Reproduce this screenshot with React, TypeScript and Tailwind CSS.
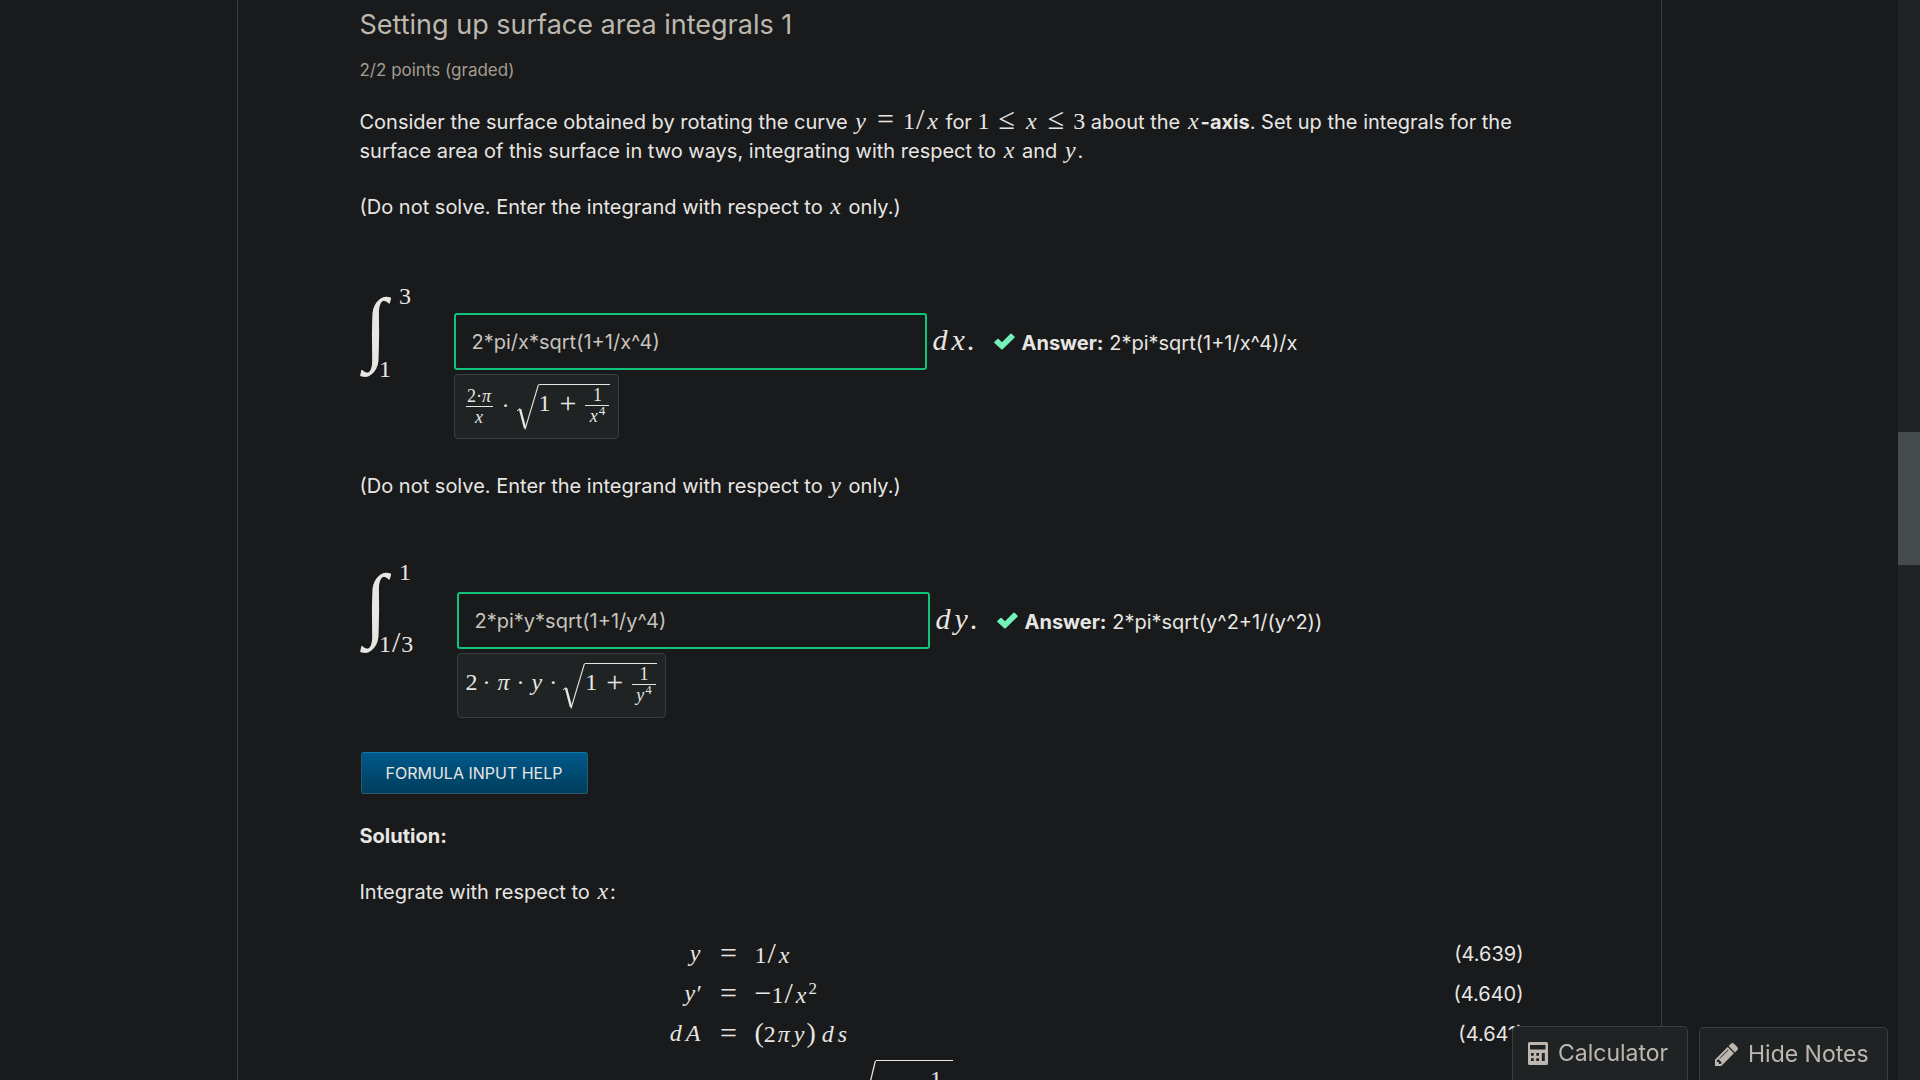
import React from "react";
import type { ReactNode } from "react";

const V = ({ children }: { children: ReactNode }) => (
  <i className="px-[2px] font-['Liberation_Serif',serif] leading-none italic">{children}</i>
);

const M = ({ children, className = "text-[24px]" }: { children: ReactNode; className?: string }) => (
  <span className={`font-['Liberation_Serif',serif] leading-none whitespace-nowrap ${className}`}>{children}</span>
);

const Op = ({ children }: { children: ReactNode }) => (
  <span className="px-[9px] text-[30px] leading-none">{children}</span>
);

const Slash = () => <span className="px-px text-[30px] leading-none">/</span>;

const Fraction = ({ top, bottom, className = "" }: { top: ReactNode; bottom: ReactNode; className?: string }) => (
  <span className={`inline-flex flex-col items-center leading-none ${className}`}>
    <span className="w-full border-b border-[#e8e6e3] pb-px text-center">{top}</span>
    <span className="pt-px">{bottom}</span>
  </span>
);

const Radical = ({ className }: { className: string }) => (
  <svg viewBox="0 0 23 46" preserveAspectRatio="none" className={`shrink-0 ${className}`} fill="none" stroke="#e8e6e3">
    <path d="M1 27 L4 24.5" strokeWidth="1" />
    <path d="M4 25 L9 44" strokeWidth="2.4" />
    <path d="M9 45.5 L22.5 0.5" strokeWidth="1.1" />
  </svg>
);

const Check = () => (
  <svg viewBox="0 0 21 17" className="h-[17px] w-[21px]" fill="#72f1b8" aria-label="correct">
    <path d="M0.4 8.8 L3.4 5.9 Q4 5.4 4.6 5.9 L8 9.3 L16.4 0.8 Q17 0.3 17.6 0.8 L20.5 3.6 Q21 4.2 20.5 4.8 L8.7 16.3 Q8 16.9 7.3 16.3 L0.4 9.9 Q0 9.4 0.4 8.8 Z" />
  </svg>
);

type ResponseProps = {
  id: string;
  upper: string;
  lower: ReactNode;
  value: string;
  variable: string;
  answer: string;
  offset: string;
  preview: ReactNode;
};

const Response = ({ id, upper, lower, value, variable, answer, offset, preview }: ResponseProps) => (
  <div className="flex">
    <div className={`flex h-[94px] shrink-0 pl-[5px] ${offset}`}>
      <M className="text-[82px] italic">∫</M>
      <div className="-mt-[3px] flex flex-col justify-between">
        <M className="pl-[12px] text-[24px]">{upper}</M>
        <M className="-ml-[8px] text-[24px]">{lower}</M>
      </div>
    </div>
    <div className="pt-[26px]">
      <div className="flex items-center">
        <input
          id={id}
          aria-label={`Integrand with respect to ${variable}`}
          defaultValue={value}
          className="h-[57px] w-[473px] rounded-[3px] border-2 border-[#11c47a] bg-[#181a1b] px-4 text-[20px] text-[#c8c3bc] outline-none"
        />
        <span className="w-[67px] pl-[4px]">
          <M className="text-[30px]">
            <V>d</V>
            <V>{variable}</V>.
          </M>
        </span>
        <Check />
        <label htmlFor={id} className="pt-[3px] pl-[7px]">
          <b>Answer:</b> {answer}
        </label>
      </div>
      <div className="mt-1 inline-flex h-[65px] items-center rounded-[4px] border border-[#3a3e41] bg-[#1f2324] px-2">
        {preview}
      </div>
    </div>
  </div>
);

const RootOfSum = ({ variable }: { variable: string }) => (
  <span className="inline-flex items-start">
    <Radical className="h-[46px] w-[23px]" />
    <span className="flex h-[42px] items-center border-t border-[#e8e6e3] pr-px">
      <span className="pb-1">1</span>
      <span className="pb-1">
        <Op>+</Op>
      </span>
      <Fraction
        className="w-[24px] text-[18px]"
        top="1"
        bottom={
          <>
            <i className="pr-px">{variable}</i>
            <sup className="text-[13px]">4</sup>
          </>
        }
      />
    </span>
  </span>
);

const Equation = ({ left, right, number }: { left: ReactNode; right: ReactNode; number: string }) => (
  <tr className="h-10">
    <td className="w-[343px] p-0 text-right">
      <M>{left}</M>
    </td>
    <td className="w-[52px] p-0 text-center">
      <M className="text-[30px]">=</M>
    </td>
    <td className="p-0 text-left">
      <M>{right}</M>
    </td>
    <td className="p-0 text-right">{number}</td>
  </tr>
);

const CalculatorIcon = () => (
  <svg viewBox="0 0 20 23" className="h-[23px] w-5" fill="#bdb7af" fillRule="evenodd" aria-hidden="true">
    <path d="M1.5 0H18.5Q20 0 20 1.5V21.5Q20 23 18.5 23H1.5Q0 23 0 21.5V1.5Q0 0 1.5 0ZM2 3V7.5H17.5V3ZM3 11H5.7V13.7H3ZM8.3 11H11V13.7H8.3ZM13.8 11H16.8V19H13.8ZM3 16.3H5.7V19H3ZM8.3 16.3H11V19H8.3Z" />
  </svg>
);

const PencilIcon = () => (
  <svg viewBox="128 149 1515 1515" className="h-[23px] w-[23px]" fill="#bdb7af" aria-hidden="true">
    <path d="M491 1536l91-91-235-235-91 91v107h128v128h107zm523-928q0-22-22-22-10 0-17 7l-542 542q-7 7-7 17 0 22 22 22 10 0 17-7l542-542q7-7 7-17zm-54-192l416 416-832 832h-416v-416zm683 96q0 53-37 90l-166 166-416-416 166-165q36-38 90-38 53 0 91 38l235 234q37 39 37 91z" />
  </svg>
);

export default function App() {
  return (
    <div className="flex h-screen overflow-hidden bg-[#181a1b] font-['Inter',sans-serif] text-[20px] leading-[29px] text-[#e8e6e3]">
      <div className="min-w-0 flex-1">
        <main className="mx-auto min-h-full max-w-[1425px] border-x border-[#3a3e41] pr-[137px] pl-[122px]">
          <h2 className="pt-[9px] text-[27px] leading-8 text-[#bdb7af]">Setting up surface area integrals 1</h2>
          <p className="pt-[15px] text-[17px] text-[#a49d92]">2/2 points (graded)</p>
          <p className="pt-[19px]">
            Consider the surface obtained by rotating the curve{" "}
            <M>
              <V>y</V>
              <Op>=</Op>1<Slash />
              <V>x</V>
            </M>{" "}
            for{" "}
            <M>
              1<Op>≤</Op>
              <V>x</V>
              <Op>≤</Op>3
            </M>{" "}
            about the{" "}
            <M>
              <V>x</V>
            </M>
            <b>-axis</b>. Set up the integrals for the surface area of this surface in two ways, integrating with
            respect to{" "}
            <M>
              <V>x</V>
            </M>{" "}
            and{" "}
            <M>
              <V>y</V>
            </M>
            .
          </p>
          <p className="pt-[27px]">
            (Do not solve. Enter the integrand with respect to{" "}
            <M>
              <V>x</V>
            </M>{" "}
            only.)
          </p>
          <div className="pt-[65px]">
            <Response
              id="response-x"
              upper="3"
              lower="1"
              value="2*pi/x*sqrt(1+1/x^4)"
              variable="x"
              answer="2*pi*sqrt(1+1/x^4)/x"
              offset="w-[94px]"
              preview={
                <M className="flex items-center text-[24px]">
                  <Fraction
                    className="mx-[3px] w-[27px] text-[18px]"
                    top={
                      <>
                        2·<i>π</i>
                      </>
                    }
                    bottom={<V>x</V>}
                  />
                  <span className="px-[6px] pb-1">·</span>
                  <RootOfSum variable="x" />
                </M>
              }
            />
          </div>
          <p className="pt-[33px]">
            (Do not solve. Enter the integrand with respect to{" "}
            <M>
              <V>y</V>
            </M>{" "}
            only.)
          </p>
          <div className="pt-[65px]">
            <Response
              id="response-y"
              upper="1"
              lower={
                <>
                  1<Slash />3
                </>
              }
              value="2*pi*y*sqrt(1+1/y^4)"
              variable="y"
              answer="2*pi*sqrt(y^2+1/(y^2))"
              offset="-mt-[3px] w-[97px]"
              preview={
                <M className="flex items-center text-[24px]">
                  <span className="pb-[7px]">
                    2<span className="px-[5px]">·</span>
                    <V>π</V>
                    <span className="px-[5px]">·</span>
                    <V>y</V>
                    <span className="px-[5px]">·</span>
                  </span>
                  <RootOfSum variable="y" />
                </M>
              }
            />
          </div>
          <button className="mt-[34px] ml-px h-[42px] w-[227px] rounded-[3px] border border-[#2b5a73] border-t-[#0b79b0] bg-linear-to-b from-[#00598c] to-[#003e5c] text-[16px] uppercase">
            Formula Input Help
          </button>
          <p className="pt-[28px] font-bold">Solution:</p>
          <p className="pt-[27px]">
            Integrate with respect to{" "}
            <M>
              <V>x</V>
            </M>
            :
          </p>
          <table className="mt-[27px] w-full border-collapse">
            <tbody>
              <Equation
                left={<V>y</V>}
                right={
                  <>
                    1<Slash />
                    <V>x</V>
                  </>
                }
                number="(4.639)"
              />
              <Equation
                left={<V>y′</V>}
                right={
                  <>
                    <span className="text-[30px] leading-none">−</span>1<Slash />
                    <V>x</V>
                    <sup className="text-[17px]">2</sup>
                  </>
                }
                number="(4.640)"
              />
              <Equation
                left={
                  <>
                    <V>d</V>
                    <V>A</V>
                  </>
                }
                right={
                  <>
                    <span className="text-[28px] leading-none">(</span>2<V>π</V>
                    <V>y</V>
                    <span className="pr-1 text-[28px] leading-none">)</span>
                    <V>d</V>
                    <V>s</V>
                  </>
                }
                number="(4.641)"
              />
              <tr>
                <td />
                <td />
                <td className="p-0 pt-[6px]" colSpan={2}>
                  <M className="flex items-center text-[24px]">
                    <span>
                      2<V>π</V>
                    </span>
                    <span className="px-[6px]">
                      <span className="text-[28px] leading-none">(</span>1<Slash />
                      <V>x</V>
                      <span className="text-[28px] leading-none">)</span>
                    </span>
                    <Radical className="h-[64px] w-[26px]" />
                    <span className="flex h-[64px] items-center border-t border-[#e8e6e3] pr-1">
                      1<Op>+</Op>
                      <Fraction
                        className="w-[26px] text-[24px]"
                        top="1"
                        bottom={
                          <>
                            <V>x</V>
                            <sup className="text-[17px]">4</sup>
                          </>
                        }
                      />
                    </span>
                  </M>
                </td>
              </tr>
            </tbody>
          </table>
        </main>
      </div>
      <div className="w-[22px] shrink-0 bg-[#202324] pt-[432px]">
        <div className="h-[133px] bg-[#454a4d]" />
      </div>
      <div className="fixed right-8 bottom-0 flex items-end gap-[11px] text-[23px] text-[#bdb7af]">
        <button className="flex h-[54px] w-[176px] items-center gap-[10px] rounded-t-[5px] border border-b-0 border-[#3a3e41] bg-[#1f2324] pl-[15px]">
          <CalculatorIcon />
          Calculator
        </button>
        <button className="flex h-[53px] w-[189px] items-center gap-[10px] rounded-t-[5px] border border-b-0 border-[#3a3e41] bg-[#1f2324] pl-[15px]">
          <PencilIcon />
          Hide Notes
        </button>
      </div>
    </div>
  );
}
